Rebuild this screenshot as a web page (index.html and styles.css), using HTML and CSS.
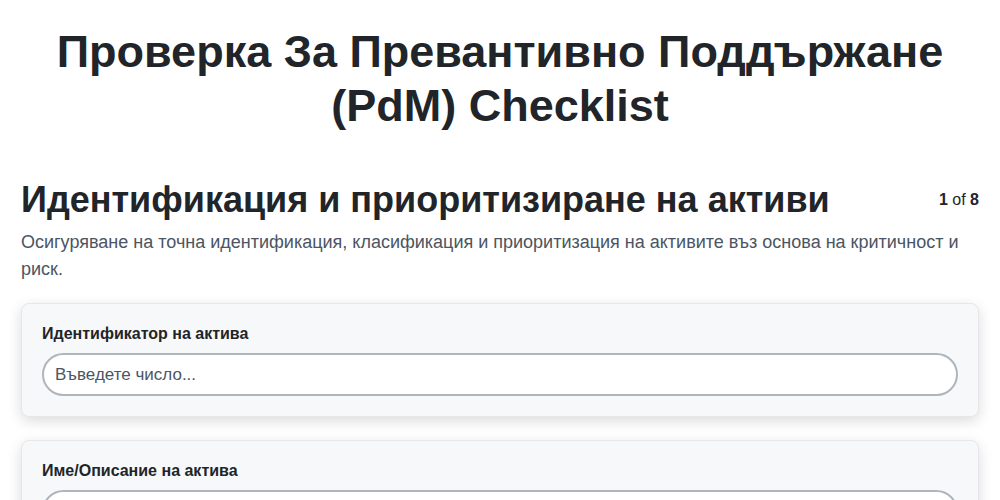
FILE: index.html
```html
<!DOCTYPE html>
<html lang="bg">
<head>
<meta charset="utf-8">
<title>PdM Checklist</title>
<link rel="stylesheet" href="styles.css">
</head>
<body>
<div class="page">
  <h1 class="title">Проверка За Превантивно Поддържане (PdM) Checklist</h1>
  <div class="section-head">
    <h2 class="section-title">Идентификация и приоритизиране на активи</h2>
    <div class="step"><b>1</b> of <b>8</b></div>
  </div>
  <p class="section-desc">Осигуряване на точна идентификация, класификация и приоритизация на активите въз основа на критичност и риск.</p>
  <div class="card">
    <label class="field-label">Идентификатор на актива</label>
    <input class="field-input" type="text" placeholder="Въведете число...">
  </div>
  <div class="card">
    <label class="field-label">Име/Описание на актива</label>
    <input class="field-input" type="text" placeholder="Въведете текст...">
  </div>
</div>
</body>
</html>
```
FILE: styles.css
```css
html, body {
  margin: 0;
  padding: 0;
  background: #ffffff;
}
body {
  font-family: "Liberation Sans", Arial, sans-serif;
  color: #212529;
}
.page {
  padding: 0 21px;
}
.title {
  margin: 25px 0 0;
  font-size: 45px;
  line-height: 54px;
  font-weight: 700;
  text-align: center;
  color: #212529;
}
.section-head {
  display: flex;
  justify-content: space-between;
  align-items: center;
  margin-top: 45px;
}
.section-title {
  margin: 0;
  font-size: 36px;
  line-height: 43px;
  font-weight: 700;
  color: #212529;
}
.step {
  font-size: 16px;
  color: #212529;
}
.step b {
  font-weight: 700;
}
.section-desc {
  margin: 8px 0 20px;
  font-size: 18px;
  line-height: 27px;
  color: #4b5563;
}
.card {
  background: #f7f8fa;
  border: 1px solid #e5e7eb;
  border-radius: 8px;
  padding: 20px;
  margin-bottom: 23px;
  box-shadow: 0 4px 14px rgba(0, 0, 0, 0.14);
}
.field-label {
  display: block;
  font-size: 16px;
  line-height: 19px;
  font-weight: 700;
  color: #212529;
  margin-bottom: 10px;
}
.field-input {
  display: block;
  box-sizing: border-box;
  width: 100%;
  height: 43px;
  padding: 0 11px;
  border: 2px solid #adb5bd;
  border-radius: 22px;
  background: #ffffff;
  font-family: "Liberation Sans", Arial, sans-serif;
  font-size: 17px;
  color: #212529;
  outline: none;
}
.field-input::placeholder {
  color: #4b5563;
  opacity: 1;
}
```
